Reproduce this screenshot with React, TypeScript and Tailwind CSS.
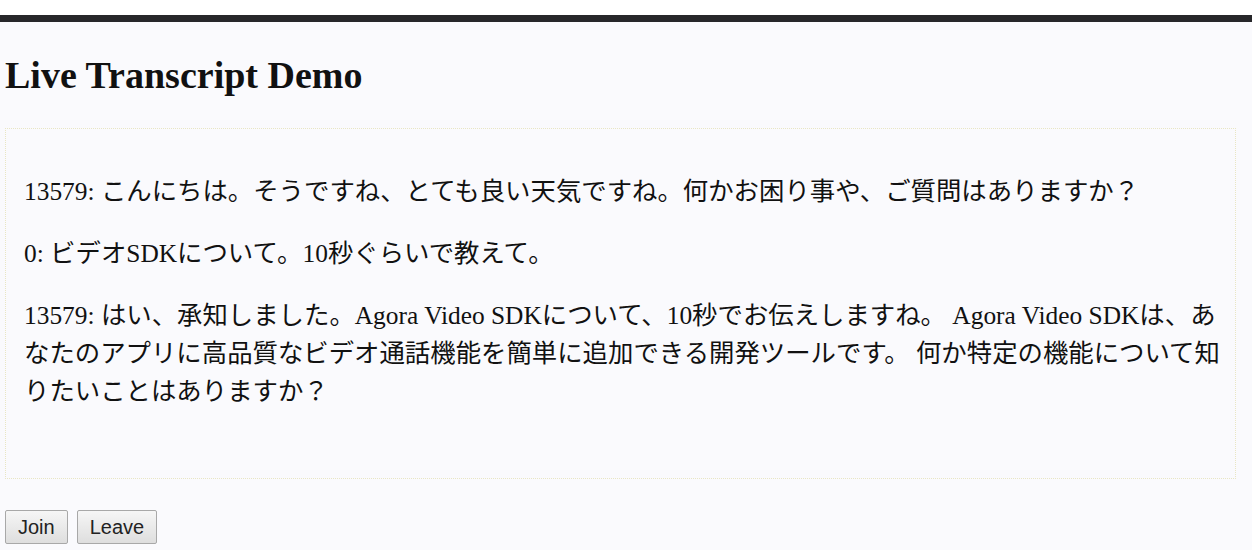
const messages = [
  "13579: こんにちは。そうですね、とても良い天気ですね。何かお困り事や、ご質問はありますか？",
  "0: ビデオSDKについて。10秒ぐらいで教えて。",
  "13579: はい、承知しました。Agora Video SDKについて、10秒でお伝えしますね。 Agora Video SDKは、あなたのアプリに高品質なビデオ通話機能を簡単に追加できる開発ツールです。 何か特定の機能について知りたいことはありますか？",
];

export default function App() {
  return (
    <div className="w-[1252px] h-[550px] overflow-hidden bg-white">
      <div className="h-[15px] bg-white" />
      <div className="h-[7px] bg-[#27272a]" />
      <main className="h-[528px] bg-[#fafafd] pl-[5px] pr-[16px] pt-[32px] font-['Liberation_Serif','Noto_Sans_CJK_JP',serif] text-[#111]">
        <h2 className="text-[38px] leading-[43px] font-bold">Live Transcript Demo</h2>

        <div className="mt-[31px] h-[351px] border border-dotted border-[#e9e6c4] pl-[18px] pr-[10px] pt-[19px]">
          {messages.map((msg, i) => (
            <p key={i} className="my-[24px] text-[25.4px] leading-[38px]">
              {msg}
            </p>
          ))}
        </div>

        <div className="mt-[31px] flex gap-[9px] font-['Liberation_Sans',sans-serif]">
          <button className="h-[34px] px-[12px] text-[20px] text-[#222] rounded-[2px] border border-[#a8a8a8] bg-gradient-to-b from-[#f6f6f6] to-[#dedede]">
            Join
          </button>
          <button className="h-[34px] px-[12px] text-[20px] text-[#222] rounded-[2px] border border-[#a8a8a8] bg-gradient-to-b from-[#f6f6f6] to-[#dedede]">
            Leave
          </button>
        </div>
      </main>
    </div>
  );
}
